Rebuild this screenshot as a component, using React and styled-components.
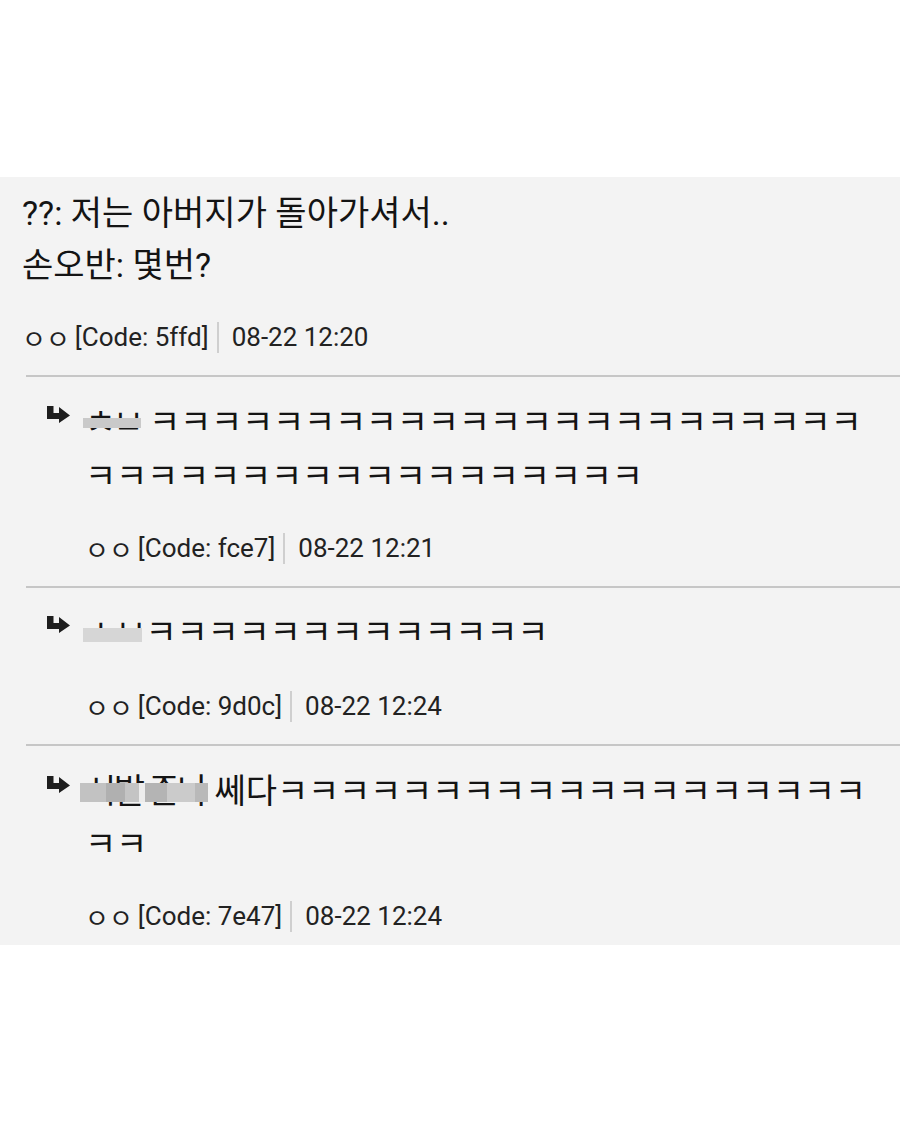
import React from "react";
import styled, { createGlobalStyle } from "styled-components";

const Global = createGlobalStyle`
  html, body { margin: 0; padding: 0; background: #ffffff; }
  body { font-family: Roboto, "Noto Sans CJK KR", sans-serif; color: #151515; }
`;

const Page = styled.div`
  width: 900px;
  height: 1125px;
  padding-top: 177px;
  box-sizing: border-box;
  overflow: hidden;
`;

const Panel = styled.section`
  background: #f3f3f3;
  padding-bottom: 14px;
`;

const MainComment = styled.article`
  padding: 10px 0 23px 22px;
`;

const Body = styled.div`
  font-size: 34px;
  line-height: ${(p) => p.$lh}px;
  color: #141414;
  white-space: nowrap;
`;

const Laugh = styled.span`
  letter-spacing: -0.3px;
`;

const Meta = styled.div`
  display: flex;
  align-items: center;
  margin-top: ${(p) => p.$gap}px;
  height: 30px;
  font-size: 26px;
  color: #222;
  white-space: nowrap;
`;

const Author = styled.span`
  margin-right: 5px;
`;

const Sep = styled.span`
  display: inline-block;
  width: 2px;
  height: 31px;
  background: #cfcfcf;
  margin: 0 13px 0 8px;
`;

const Divider = styled.hr`
  border: 0;
  height: 2px;
  margin: 0 0 0 26px;
  background: #c6c6c6;
`;

const Reply = styled.article`
  display: grid;
  grid-template-columns: 38px 1fr;
  padding: ${(p) => p.$pt}px 0 ${(p) => p.$pb}px 47px;
`;

const ArrowBox = styled.div`
  padding-top: ${(p) => p.$top}px;
`;

const Censor = styled.span`
  position: relative;
  display: inline-block;
  letter-spacing: ${(p) => p.$ls}px;
  &::after {
    content: "";
    position: absolute;
    left: ${(p) => p.$l}px;
    right: ${(p) => p.$r}px;
    top: ${(p) => p.$t}px;
    height: ${(p) => p.$h}px;
    background: ${(p) => p.$bg};
  }
`;

const Arrow = () => (
  <svg width="23" height="17" viewBox="0 0 23 17">
    <path d="M0 0 H6.5 V7 H12 V1 L23 9.5 L12 17 V13 H0 Z" fill="#1e1e1e" />
  </svg>
);

const MetaLine = ({ code, time, gap }) => (
  <Meta $gap={gap}>
    <Author>ㅇㅇ</Author>
    <span>[Code: {code}]</span>
    <Sep />
    <span>{time}</span>
  </Meta>
);

const k = (n) => <Laugh>{"ㅋ".repeat(n)}</Laugh>;

export default function App() {
  return (
    <Page>
      <Global />
      <Panel>
        <MainComment>
          <Body $lh={52}>
            ??: 저는 아버지가 돌아가셔서..
            <br />
            손오반: 몇번?
          </Body>
          <MetaLine code="5ffd" time="08-22 12:20" gap={31} />
        </MainComment>
        <Divider />

        <Reply $pt={18} $pb={23}>
          <ArrowBox $top={11}>
            <Arrow />
          </ArrowBox>
          <div>
            <Body $lh={54}>
              <Censor $ls={-3.5} $l={-2} $r={0} $t={23} $h={10} $bg="#c9c9c9">ㅊㅂ</Censor> {k(23)}
              <br />
              {k(18)}
            </Body>
            <MetaLine code="fce7" time="08-22 12:21" gap={30} />
          </div>
        </Reply>
        <Divider />

        <Reply $pt={17} $pb={23}>
          <ArrowBox $top={11}>
            <Arrow />
          </ArrowBox>
          <div>
            <Body $lh={54}>
              <Censor $ls={-1} $l={-2} $r={4} $t={23} $h={14} $bg="#d6d6d6">ㅅㅂ</Censor>{k(13)}
            </Body>
            <MetaLine code="9d0c" time="08-22 12:24" gap={32} />
          </div>
        </Reply>
        <Divider />

        <Reply $pt={19} $pb={0}>
          <ArrowBox $top={11}>
            <Arrow />
          </ArrowBox>
          <div>
            <Body $lh={53}>
              <Censor
                $ls={-2.5}
                $l={-5}
                $r={-2}
                $t={18}
                $h={19}
                $bg="linear-gradient(90deg, #c2c2c2 0 20%, #b0b0b0 20% 35%, #c4c4c4 35% 46%, #ececec 46% 51%, #b4b4b4 51% 68%, #cbcbcb 68% 90%, #b9b9b9 90% 100%)"
              >
                시발 존나
              </Censor>{" "}
              쎄다{k(19)}
              <br />
              {k(2)}
            </Body>
            <MetaLine code="7e47" time="08-22 12:24" gap={30} />
          </div>
        </Reply>
      </Panel>
    </Page>
  );
}
